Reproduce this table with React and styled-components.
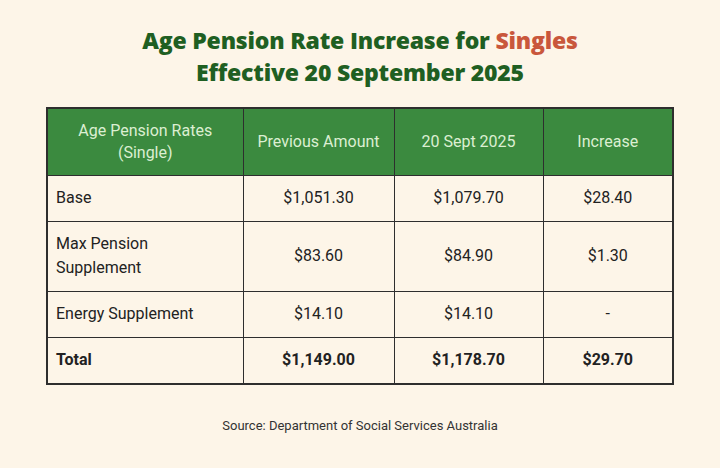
import React from "react";
import styled, { createGlobalStyle } from "styled-components";

const Global = createGlobalStyle`
  html, body { margin: 0; padding: 0; background: #fdf5e8; }
  body { width: 720px; height: 468px; overflow: hidden; }
`;

const Page = styled.div`
  width: 720px;
  height: 468px;
  display: flex;
  flex-direction: column;
  align-items: center;
  background: #fdf5e8;
  font-family: Roboto, "Liberation Sans", sans-serif;
`;

const Title = styled.h1`
  margin: 24px 0 0;
  font-family: "Open Sans", Lato, sans-serif;
  font-weight: 800;
  font-size: 23px;
  line-height: 32px;
  letter-spacing: -0.2px;
  text-align: center;
  color: #1f5f22;
`;

const Accent = styled.span`
  color: #c9573c;
`;

const Table = styled.table`
  margin-top: 19px;
  width: 626px;
  table-layout: fixed;
  border-collapse: collapse;
  border: 2px solid #2e2e2e;
`;

const Th = styled.th`
  box-sizing: border-box;
  background: #3b8a3f;
  color: #dcefd2;
  font-weight: 400;
  font-size: 16px;
  line-height: 22px;
  height: 67px;
  padding: 0 6px;
  border: 1.5px solid #2e2e2e;
  width: ${(p) => p.w}px;
`;

const Td = styled.td`
  font-size: 16px;
  line-height: 24px;
  color: #222;
  font-weight: ${(p) => (p.bold ? 700 : 400)};
  text-align: ${(p) => (p.left ? "left" : "center")};
  padding: ${(p) => (p.left ? "0 8px" : "0 6px")};
  height: ${(p) => p.h}px;
  border: 1.5px solid #2e2e2e;
`;

const Source = styled.p`
  margin: 33px 0 0;
  font-size: 13px;
  color: #333;
`;

const rows = [
  { label: "Base", prev: "$1,051.30", now: "$1,079.70", inc: "$28.40", h: 45 },
  { label: "Max Pension\nSupplement", prev: "$83.60", now: "$84.90", inc: "$1.30", h: 69 },
  { label: "Energy Supplement", prev: "$14.10", now: "$14.10", inc: "-", h: 45 },
  { label: "Total", prev: "$1,149.00", now: "$1,178.70", inc: "$29.70", h: 45, bold: true },
];

export default function App() {
  return (
    <Page>
      <Global />
      <Title>
        Age Pension Rate Increase for <Accent>Singles</Accent>
        <br />
        Effective 20 September 2025
      </Title>
      <Table>
        <thead>
          <tr>
            <Th w={196}>
              Age Pension Rates
              <br />
              (Single)
            </Th>
            <Th w={151}>Previous Amount</Th>
            <Th w={149}>20 Sept 2025</Th>
            <Th w={130}>Increase</Th>
          </tr>
        </thead>
        <tbody>
          {rows.map((r) => (
            <tr key={r.label}>
              <Td left h={r.h} bold={r.bold}>
                {r.label.split("\n").map((t, i) => (
                  <React.Fragment key={i}>
                    {i > 0 && <br />}
                    {t}
                  </React.Fragment>
                ))}
              </Td>
              <Td h={r.h} bold={r.bold}>{r.prev}</Td>
              <Td h={r.h} bold={r.bold}>{r.now}</Td>
              <Td h={r.h} bold={r.bold}>{r.inc}</Td>
            </tr>
          ))}
        </tbody>
      </Table>
      <Source>Source: Department of Social Services Australia</Source>
    </Page>
  );
}
